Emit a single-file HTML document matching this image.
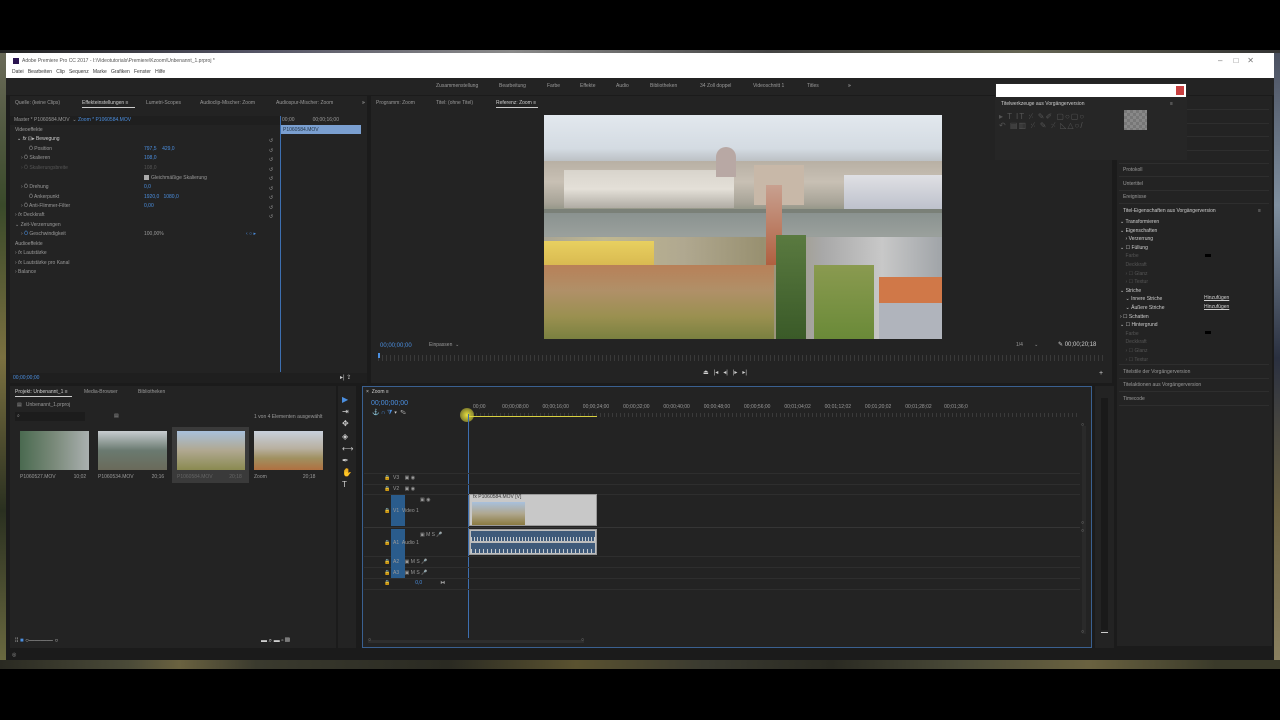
<!DOCTYPE html>
<html><head><meta charset="utf-8">
<style>
*{margin:0;padding:0;box-sizing:border-box}
body{width:1280px;height:720px;background:#000;position:relative;overflow:hidden;font-family:"Liberation Sans",sans-serif;font-size:5px;color:#9a9a9a}
div,span{position:absolute}
.p{background:#232323}
.t{white-space:nowrap;line-height:1}
.b{color:#4b8fe0}
.w{color:#cfcfcf}
.hl{height:1px;background:#2e2e2e}
</style></head><body>
<div style="left:0;top:50px;width:1280px;height:3px;background:linear-gradient(90deg,#222,#556,#8a8a8a,#444 60%,#665 80%,#333)"></div>
<div style="left:0;top:53px;width:6px;height:610px;background:linear-gradient(180deg,#6a6a58,#3a4a2a,#7a7040,#2a3020,#6b6a40)"></div>
<div style="left:1274px;top:53px;width:6px;height:610px;background:linear-gradient(180deg,#4a5060,#8090a0,#2a3040,#6a6040,#8a8060)"></div>
<div style="left:0;top:660px;width:1280px;height:9px;background:linear-gradient(90deg,#2a2a22,#4a4a38 10%,#6a6240 14%,#3a3a2e 20%,#2a2a22 35%,#5a5230 45%,#3a3a30 55%,#2a2a22 65%,#4a4a38 75%,#6a6240 85%,#3a3a2a 95%)"></div>
<div style="left:6px;top:53px;width:1268px;height:607px;background:#1b1b1b"></div>
<div style="left:6px;top:53px;width:1268px;height:25px;background:#fff"></div>
<div style="left:13px;top:58px;width:6px;height:6px;background:#2a1450"></div>
<div class="t" style="left:22px;top:59px;color:#555">Adobe Premiere Pro CC 2017 - I:\Videotutorials\Premiere\Kzoom\Unbenannt_1.prproj *</div>
<div class="t" style="left:12px;top:70px;color:#333">Datei &nbsp; Bearbeiten &nbsp; Clip &nbsp; Sequenz &nbsp; Marke &nbsp; Grafiken &nbsp; Fenster &nbsp; Hilfe</div>
<div class="t" style="left:1218px;top:57px;color:#777;font-size:8px">–&nbsp;&nbsp;&nbsp;&nbsp;&nbsp;□&nbsp;&nbsp;&nbsp;&nbsp;✕</div>
<div style="left:6px;top:78px;width:1268px;height:17px;background:#232323"></div>
<div class="t" style="left:436px;top:84px">Zusammenstellung</div>
<div class="t" style="left:499px;top:84px">Bearbeitung</div>
<div class="t" style="left:547px;top:84px">Farbe</div>
<div class="t" style="left:580px;top:84px">Effekte</div>
<div class="t" style="left:616px;top:84px">Audio</div>
<div class="t" style="left:650px;top:84px">Bibliotheken</div>
<div class="t" style="left:700px;top:84px">34 Zoll doppel</div>
<div class="t" style="left:753px;top:84px">Videoschnitt 1</div>
<div class="t" style="left:807px;top:84px">Titles</div>
<div class="t w" style="left:848px;top:84px">»</div>
<div class="p" style="left:10px;top:96px;width:357px;height:287px"></div>
<div class="t" style="left:15px;top:101px">Quelle: (keine Clips)</div>
<div class="t w" style="left:82px;top:101px">Effekteinstellungen ≡</div>
<div style="left:82px;top:107px;width:53px;height:1px;background:#ccc"></div>
<div class="t" style="left:146px;top:101px">Lumetri-Scopes</div>
<div class="t" style="left:200px;top:101px">Audioclip-Mischer: Zoom</div>
<div class="t" style="left:276px;top:101px">Audiospur-Mischer: Zoom</div>
<div class="t w" style="left:362px;top:101px">»</div>
<div style="left:10px;top:116px;width:270px;height:9px;background:#1f1f1f"></div>
<div class="t" style="left:14px;top:118px">Master * P1060584.MOV &nbsp;⌄ <span class="b" style="position:static">Zoom * P1060584.MOV</span></div>
<div class="t" style="left:15px;top:128px">Videoeffekte</div>
<div class="t w" style="left:17px;top:137px">⌄ <i>fx</i> ⊡▸ Bewegung</div>
<div class="t" style="left:29px;top:147px">Ö Position</div><div class="t b" style="left:144px;top:147px">797,5 &nbsp;&nbsp; 429,0</div>
<div class="t" style="left:21px;top:156px">› Ö Skalieren</div><div class="t b" style="left:144px;top:156px">108,0</div>
<div class="t" style="left:21px;top:166px;color:#555">› Ö Skalierungsbreite</div><div class="t" style="left:144px;top:166px;color:#555">108,0</div>
<div style="left:144px;top:175px;width:5px;height:5px;background:#aaa"></div><div class="t" style="left:151px;top:176px">Gleichmäßige Skalierung</div>
<div class="t" style="left:21px;top:185px">› Ö Drehung</div><div class="t b" style="left:144px;top:185px">0,0</div>
<div class="t" style="left:29px;top:195px">Ö Ankerpunkt</div><div class="t b" style="left:144px;top:195px">1920,0 &nbsp; 1080,0</div>
<div class="t" style="left:21px;top:204px">› Ö Anti-Flimmer-Filter</div><div class="t b" style="left:144px;top:204px">0,00</div>
<div class="t" style="left:15px;top:213px">› <i>fx</i> Deckkraft</div>
<div class="t" style="left:15px;top:223px">⌄ Zeit-Verzerrungen</div>
<div class="t" style="left:21px;top:232px">› <span class="b" style="position:static">Ö</span> Geschwindigkeit</div><div class="t" style="left:144px;top:232px">100,00%</div><div class="t b" style="left:246px;top:232px">‹ ○ ▸</div>
<div class="t" style="left:15px;top:242px">Audioeffekte</div>
<div class="t" style="left:15px;top:251px">› <i>fx</i> Lautstärke</div>
<div class="t" style="left:15px;top:261px">› <i>fx</i> Lautstärke pro Kanal</div>
<div class="t" style="left:15px;top:270px">› Balance</div>
<div class="t" style="left:269px;top:137px;line-height:9.5px;width:6px">↺<br>↺<br>↺<br>↺<br>↺<br>↺<br>↺<br>↺<br>↺</div>
<div style="left:280px;top:116px;width:1px;height:256px;background:#3d6fb0"></div>
<div class="t" style="left:282px;top:118px">00;00 &nbsp;&nbsp;&nbsp;&nbsp;&nbsp;&nbsp;&nbsp;&nbsp;&nbsp;&nbsp;&nbsp; 00;00;16;00</div>
<div style="left:281px;top:125px;width:80px;height:9px;background:#7a9fd0"></div>
<div class="t" style="left:283px;top:128px;color:#234">P1060584.MOV</div>
<div style="left:10px;top:373px;width:357px;height:10px;background:#1f1f1f"></div>
<div class="t b" style="left:13px;top:376px">00;00;00;00</div>
<div class="t w" style="left:340px;top:375px;font-size:6px">▸| ⇪</div>
<div class="p" style="left:371px;top:96px;width:741px;height:287px"></div>
<div class="t" style="left:376px;top:101px">Programm: Zoom</div>
<div class="t" style="left:436px;top:101px">Titel: (ohne Titel)</div>
<div class="t w" style="left:496px;top:101px">Referenz: Zoom ≡</div>
<div style="left:496px;top:107px;width:42px;height:1px;background:#ccc"></div>
<div style="left:544px;top:115px;width:398px;height:224px;overflow:hidden;background:#ccc">
 <div style="left:0;top:0;width:398px;height:48px;background:linear-gradient(180deg,#e2e8ee,#d4dbe2 70%,#b8bcc0)"></div>
 <div style="left:0;top:46px;width:398px;height:52px;background:linear-gradient(180deg,#b8b0a4,#c8c0b4 40%,#a8a498 80%,#8a9080)"></div>
 <div style="left:20px;top:55px;width:170px;height:38px;background:linear-gradient(180deg,#d8d4cc,#e4e0d8 50%,#b0aca4)"></div>
 <div style="left:172px;top:32px;width:20px;height:30px;border-radius:10px 10px 0 0;background:#b8a8a4"></div>
 <div style="left:210px;top:50px;width:50px;height:40px;background:#c8b8a8"></div>
 <div style="left:300px;top:60px;width:98px;height:40px;background:linear-gradient(180deg,#e0e0e4,#b8bcc8)"></div>
 <div style="left:0;top:94px;width:398px;height:4px;background:#7a8078"></div>
 <div style="left:0;top:98px;width:398px;height:38px;background:linear-gradient(180deg,#8a9290,#9aa09c 60%,#8a9088)"></div>
 <div style="left:0;top:122px;width:398px;height:102px;background:linear-gradient(90deg,#a8a494,#c0b890 15%,#b0a890 35%,#989070 55%,#a8a8a8 70%,#c8c8c8 85%,#a0a4a8)"></div>
 <div style="left:0;top:126px;width:110px;height:26px;background:linear-gradient(180deg,#e8d060,#d8b850)"></div>
 <div style="left:0;top:150px;width:230px;height:74px;background:linear-gradient(180deg,#b88058,#b09068 35%,#9a9050 70%,#7a8040)"></div>
 <div style="left:222px;top:70px;width:16px;height:80px;background:linear-gradient(180deg,#c8a090,#b06040)"></div>
 <div style="left:232px;top:120px;width:30px;height:104px;background:linear-gradient(180deg,#5a7a40,#3a5a28)"></div>
 <div style="left:270px;top:150px;width:60px;height:74px;background:linear-gradient(180deg,#8a9a50,#6a8a38)"></div>
 <div style="left:335px;top:162px;width:63px;height:26px;background:#d07848"></div>
 <div style="left:335px;top:188px;width:63px;height:36px;background:#b0b4bc"></div>
</div>
<div class="t b" style="left:380px;top:343px;font-size:6px">00;00;00;00</div>
<div class="t" style="left:429px;top:343px">Einpassen &nbsp;⌄</div>
<div class="t" style="left:1016px;top:343px">1/4 &nbsp;&nbsp;&nbsp;&nbsp;&nbsp;&nbsp; ⌄</div>
<div class="t w" style="left:1058px;top:342px;font-size:6px">✎ 00;00;20;18</div>
<div style="left:378px;top:355px;width:728px;height:6px;background:repeating-linear-gradient(90deg,#3a3a3a 0 1px,transparent 1px 4px)"></div>
<div style="left:378px;top:353px;width:2px;height:5px;background:#4b8fe0"></div>
<div class="t w" style="left:703px;top:370px;font-size:6px">⏏ &nbsp;&nbsp;|◂ &nbsp;&nbsp;◂| &nbsp;&nbsp;|▸ &nbsp;&nbsp;▸|</div>
<div class="t w" style="left:1099px;top:370px;font-size:7px">+</div>
<!-- right panels -->
<div class="p" style="left:1117px;top:96px;width:155px;height:550px"></div>
<div class="hl" style="left:1119px;top:109px;width:150px"></div>
<div class="hl" style="left:1119px;top:123px;width:150px"></div>
<div class="hl" style="left:1119px;top:136px;width:150px"></div>
<div class="hl" style="left:1119px;top:150px;width:150px"></div>
<div class="hl" style="left:1119px;top:163px;width:150px"></div>
<!-- floating title tools -->
<div style="left:995px;top:83px;width:192px;height:77px;background:#262626"></div>
<div style="left:996px;top:84px;width:190px;height:13px;background:#fff"></div>
<div style="left:1176px;top:86px;width:8px;height:9px;background:#c84040"></div>
<div class="t w" style="left:1001px;top:102px">Titelwerkzeuge aus Vorgängerversion</div>
<div class="t" style="left:1170px;top:102px">≡</div>
<div class="t" style="left:999px;top:112px;font-size:8px;color:#555;letter-spacing:1px;line-height:9px">▸ T IT ⸓ ✎✐ ▢○▢○<br>↶ ▤▥ ⸓ ✎ ⸓ ◺△○/</div>
<div style="left:1124px;top:110px;width:23px;height:20px;background:repeating-conic-gradient(#888 0 25%,#777 0 50%) 0 0/6px 6px"></div>
<div class="t" style="left:1123px;top:168px">Protokoll</div>
<div class="hl" style="left:1119px;top:176px;width:150px"></div>
<div class="t" style="left:1123px;top:182px">Untertitel</div>
<div class="hl" style="left:1119px;top:190px;width:150px"></div>
<div class="t" style="left:1123px;top:195px">Ereignisse</div>
<div class="hl" style="left:1119px;top:203px;width:150px"></div>
<div class="t w" style="left:1123px;top:209px">Titel-Eigenschaften aus Vorgängerversion</div><div class="t" style="left:1258px;top:209px">≡</div>
<div class="t w" style="line-height:8.6px;left:1120px;top:218px">⌄ Transformieren<br>⌄ Eigenschaften<br>&nbsp;&nbsp;&nbsp; › Verzerrung<br>⌄ ☐ Füllung<br><span style="position:static;color:#555">&nbsp;&nbsp;&nbsp; Farbe<br>&nbsp;&nbsp;&nbsp; Deckkraft<br>&nbsp;&nbsp;&nbsp; › ☐ Glanz<br>&nbsp;&nbsp;&nbsp; › ☐ Textur</span><br>⌄ Striche<br>&nbsp;&nbsp;&nbsp; ⌄ Innere Striche<br>&nbsp;&nbsp;&nbsp; ⌄ Äußere Striche<br>› ☐ Schatten<br>⌄ ☐ Hintergrund<br><span style="position:static;color:#555">&nbsp;&nbsp;&nbsp; Farbe<br>&nbsp;&nbsp;&nbsp; Deckkraft<br>&nbsp;&nbsp;&nbsp; › ☐ Glanz<br>&nbsp;&nbsp;&nbsp; › ☐ Textur</span></div>
<div style="left:1205px;top:254px;width:6px;height:3px;background:#000"></div>
<div style="left:1205px;top:331px;width:6px;height:3px;background:#000"></div>
<div class="t w" style="left:1204px;top:296px;text-decoration:underline">Hinzufügen</div>
<div class="t w" style="left:1204px;top:305px;text-decoration:underline">Hinzufügen</div>
<div class="hl" style="left:1119px;top:364px;width:150px"></div>
<div class="t" style="left:1123px;top:370px">Titelstile der Vorgängerversion</div>
<div class="hl" style="left:1119px;top:378px;width:150px"></div>
<div class="t" style="left:1123px;top:383px">Titelaktionen aus Vorgängerversion</div>
<div class="hl" style="left:1119px;top:391px;width:150px"></div>
<div class="t" style="left:1123px;top:397px">Timecode</div>
<div class="hl" style="left:1119px;top:405px;width:150px"></div>
<div class="p" style="left:10px;top:386px;width:326px;height:262px"></div>
<div class="t w" style="left:15px;top:390px">Projekt: Unbenannt_1 ≡</div>
<div style="left:15px;top:396px;width:57px;height:1px;background:#ccc"></div>
<div class="t" style="left:84px;top:390px">Media-Browser</div>
<div class="t" style="left:138px;top:390px">Bibliotheken</div>
<div class="t" style="left:17px;top:403px">▤ &nbsp;&nbsp;Unbenannt_1.prproj</div>
<div style="left:15px;top:412px;width:70px;height:9px;background:#1c1c1c"></div>
<div class="t" style="left:17px;top:414px">⌕</div>
<div class="t" style="left:114px;top:414px">▤</div>
<div class="t" style="left:254px;top:415px">1 von 4 Elementen ausgewählt</div>
<div style="left:172px;top:427px;width:77px;height:56px;background:#3a3a3a"></div>
<div style="left:20px;top:431px;width:69px;height:39px;background:linear-gradient(90deg,#4a6a50,#7a8a7a,#aab0b0)"></div>
<div style="left:98px;top:431px;width:69px;height:39px;background:linear-gradient(180deg,#c8ccd0,#6a7a70 50%,#6a6a5a)"></div>
<div style="left:177px;top:431px;width:68px;height:39px;background:linear-gradient(180deg,#a8c0dc,#b0a890 50%,#8a8a50)"></div>
<div style="left:254px;top:431px;width:69px;height:39px;background:linear-gradient(180deg,#c8d0dc,#b8b0a0 45%,#a09060 70%,#b07040)"></div>
<div class="t" style="left:20px;top:475px">P1060527.MOV &nbsp;&nbsp;&nbsp;&nbsp;&nbsp;&nbsp;&nbsp;&nbsp;&nbsp;&nbsp;&nbsp; 10;02</div>
<div class="t" style="left:98px;top:475px">P1060534.MOV &nbsp;&nbsp;&nbsp;&nbsp;&nbsp;&nbsp;&nbsp;&nbsp;&nbsp;&nbsp;&nbsp; 20;16</div>
<div class="t" style="left:177px;top:475px;color:#666">P1060584.MOV &nbsp;&nbsp;&nbsp;&nbsp;&nbsp;&nbsp;&nbsp;&nbsp;&nbsp;&nbsp; 20;18</div>
<div class="t" style="left:254px;top:475px">Zoom &nbsp;&nbsp;&nbsp;&nbsp;&nbsp;&nbsp;&nbsp;&nbsp;&nbsp;&nbsp;&nbsp;&nbsp;&nbsp;&nbsp;&nbsp;&nbsp;&nbsp;&nbsp;&nbsp;&nbsp;&nbsp;&nbsp;&nbsp;&nbsp; 20;18</div>
<div class="t w" style="left:15px;top:638px;font-size:6px">⁞⁞ <span class="b" style="position:static">■</span> ○———— ○</div>
<div class="t w" style="left:261px;top:638px;font-size:6px">▬ ⌕ ▬ ▫ ▥</div>
<div class="p" style="left:338px;top:386px;width:18px;height:262px"></div>
<div class="t w" style="left:342px;top:394px;font-size:8px;line-height:12.2px">
<span class="b" style="position:static">▶</span><br>⇥<br>✥<br>◈<br>⟷<br>✒<br>✋<br>T</div>
<div class="p" style="left:362px;top:386px;width:730px;height:262px;border:1px solid #3a6090"></div>
<div class="t w" style="left:366px;top:390px">× &nbsp;Zoom ≡</div>
<div class="t b" style="left:371px;top:400px;font-size:7px">00;00;00;00</div>
<div class="t b" style="left:372px;top:410px;font-size:6px">⚓ ∩ ⧩ <span class="w" style="position:static">▾ &nbsp;✎</span></div>
<div class="t" style="left:473px;top:405px;word-spacing:0">00;00 &nbsp;&nbsp;&nbsp;&nbsp;&nbsp;&nbsp;&nbsp;&nbsp;&nbsp;&nbsp; 00;00;08;00 &nbsp;&nbsp;&nbsp;&nbsp;&nbsp;&nbsp;&nbsp;&nbsp; 00;00;16;00 &nbsp;&nbsp;&nbsp;&nbsp;&nbsp;&nbsp;&nbsp;&nbsp; 00;00;24;00 &nbsp;&nbsp;&nbsp;&nbsp;&nbsp;&nbsp;&nbsp;&nbsp; 00;00;32;00 &nbsp;&nbsp;&nbsp;&nbsp;&nbsp;&nbsp;&nbsp;&nbsp; 00;00;40;00 &nbsp;&nbsp;&nbsp;&nbsp;&nbsp;&nbsp;&nbsp;&nbsp; 00;00;48;00 &nbsp;&nbsp;&nbsp;&nbsp;&nbsp;&nbsp;&nbsp;&nbsp; 00;00;56;00 &nbsp;&nbsp;&nbsp;&nbsp;&nbsp;&nbsp;&nbsp;&nbsp; 00;01;04;02 &nbsp;&nbsp;&nbsp;&nbsp;&nbsp;&nbsp;&nbsp;&nbsp; 00;01;12;02 &nbsp;&nbsp;&nbsp;&nbsp;&nbsp;&nbsp;&nbsp;&nbsp; 00;01;20;02 &nbsp;&nbsp;&nbsp;&nbsp;&nbsp;&nbsp;&nbsp;&nbsp; 00;01;28;02 &nbsp;&nbsp;&nbsp;&nbsp;&nbsp;&nbsp;&nbsp; 00;01;36;0</div>
<div style="left:468px;top:413px;width:612px;height:4px;background:repeating-linear-gradient(90deg,#3a3a3a 0 1px,transparent 1px 4px)"></div>
<div style="left:468px;top:416px;width:129px;height:1px;background:#d8d040"></div>
<div style="left:460px;top:408px;width:14px;height:14px;border-radius:50%;background:radial-gradient(#e8e040,rgba(200,200,40,.3))"></div>
<div style="left:468px;top:414px;width:1px;height:224px;background:#3d6fb0"></div>
<div class="hl" style="left:364px;top:473px;width:716px"></div>
<div class="hl" style="left:364px;top:484px;width:716px"></div>
<div class="hl" style="left:364px;top:494px;width:716px"></div>
<div class="hl" style="left:364px;top:527px;width:716px;background:#353535"></div>
<div class="hl" style="left:364px;top:556px;width:716px"></div>
<div class="hl" style="left:364px;top:567px;width:716px"></div>
<div class="hl" style="left:364px;top:578px;width:716px"></div>
<div class="hl" style="left:364px;top:589px;width:716px"></div>
<div class="t" style="left:384px;top:476px">🔒 &nbsp;V3 &nbsp;&nbsp;&nbsp;▣ ◉</div>
<div class="t" style="left:384px;top:487px">🔒 &nbsp;V2 &nbsp;&nbsp;&nbsp;▣ ◉</div>
<div style="left:391px;top:495px;width:14px;height:31px;background:#2a5c8c"></div>
<div class="t" style="left:420px;top:498px">▣ ◉</div>
<div class="t" style="left:384px;top:509px">🔒 &nbsp;V1 &nbsp;Video 1</div>
<div style="left:391px;top:529px;width:14px;height:49px;background:#2a5c8c"></div>
<div class="t" style="left:420px;top:533px">▣ M S 🎤</div>
<div class="t" style="left:384px;top:541px">🔒 &nbsp;A1 &nbsp;Audio 1</div>
<div class="t" style="left:384px;top:560px">🔒 &nbsp;A2 &nbsp;&nbsp;&nbsp;▣ M S 🎤</div>
<div class="t" style="left:384px;top:571px">🔒 &nbsp;A3 &nbsp;&nbsp;&nbsp;▣ M S 🎤</div>
<div class="t" style="left:384px;top:581px">🔒 &nbsp;&nbsp;&nbsp;&nbsp;&nbsp;&nbsp;&nbsp;&nbsp;&nbsp;&nbsp;&nbsp;&nbsp;&nbsp;&nbsp;&nbsp;&nbsp; <span class="b" style="position:static">0,0</span> &nbsp;&nbsp;&nbsp;&nbsp;&nbsp;&nbsp;&nbsp;&nbsp;&nbsp;&nbsp;&nbsp; ⧓</div>
<div style="left:469px;top:494px;width:128px;height:32px;background:#c8c8c8;border:1px solid #999"></div>
<div style="left:472px;top:502px;width:53px;height:23px;background:linear-gradient(180deg,#a8c0dc,#b0a890 50%,#8a7a40)"></div>
<div class="t" style="left:473px;top:495px;color:#333">fx P1060584.MOV [V]</div>
<div style="left:469px;top:529px;width:128px;height:26px;background:#bdbdbd;border:1px solid #999"></div>
<div style="left:471px;top:531px;width:124px;height:10px;background:#3f5a7a"></div>
<div style="left:471px;top:543px;width:124px;height:10px;background:#3f5a7a"></div>
<div style="left:471px;top:537px;width:124px;height:4px;background:repeating-linear-gradient(90deg,#c8ccd0 0 1px,transparent 1px 3px)"></div>
<div style="left:471px;top:549px;width:124px;height:4px;background:repeating-linear-gradient(90deg,#c8ccd0 0 1px,transparent 1px 4px)"></div>
<div style="left:1082px;top:426px;width:4px;height:208px;background:#2a2a2a"></div>
<div style="left:368px;top:640px;width:216px;height:3px;background:#2e2e2e"></div>
<div class="t" style="left:368px;top:638px">○</div><div class="t" style="left:581px;top:638px">○</div>
<div class="t" style="left:1081px;top:423px">○</div><div class="t" style="left:1081px;top:521px">○</div><div class="t" style="left:1081px;top:529px">○</div><div class="t" style="left:1081px;top:630px">○</div>
<div class="p" style="left:1095px;top:386px;width:19px;height:262px"></div>
<div style="left:1101px;top:398px;width:7px;height:232px;background:#1a1a1a"></div>
<div style="left:1101px;top:632px;width:7px;height:1px;background:#ccc"></div>
<div class="t" style="left:12px;top:653px">◎</div>
</body></html>
